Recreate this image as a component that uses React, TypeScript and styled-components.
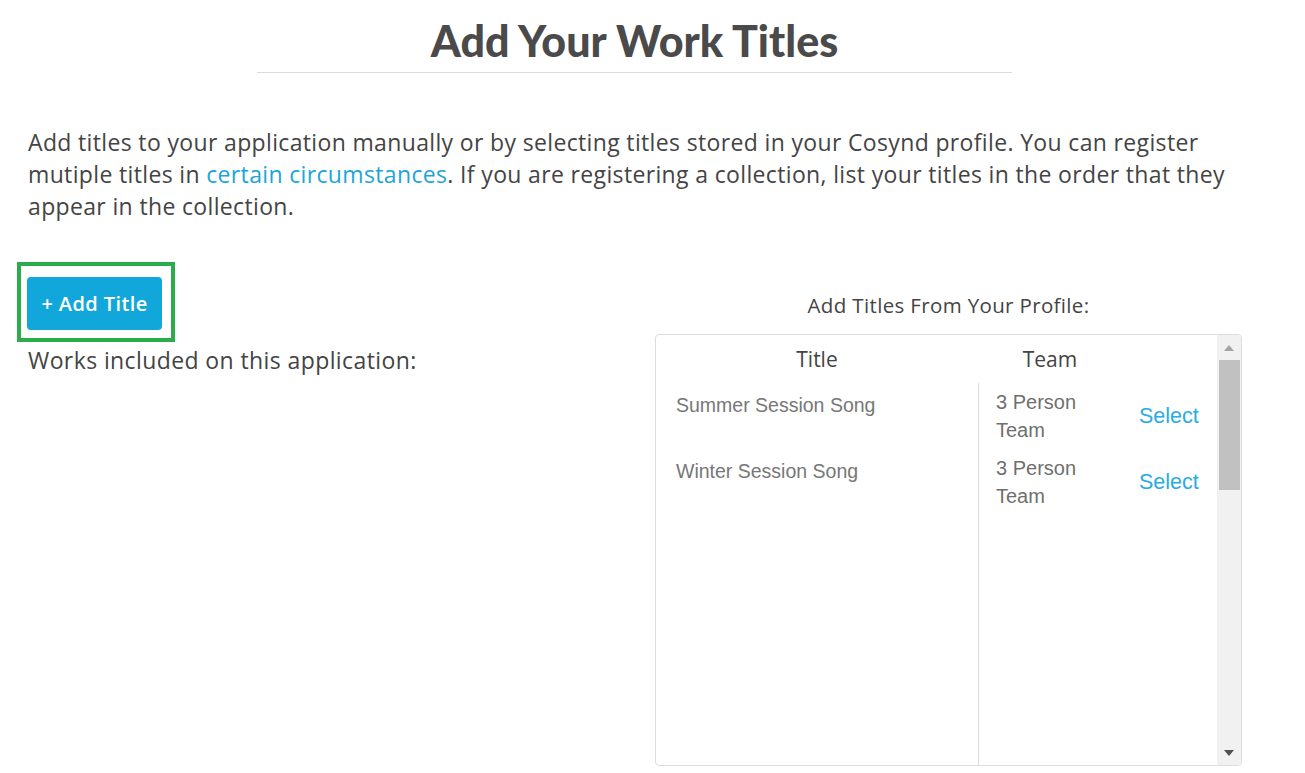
import React from "react";
import styled, { createGlobalStyle } from "styled-components";

const Global = createGlobalStyle`
  html, body { margin: 0; padding: 0; background: #fff; }
  body { font-family: "Open Sans", "Noto Sans", sans-serif; color: #444; }
  * { box-sizing: border-box; }
`;

const Page = styled.div`
  width: 1269px;
  padding: 15px 0 0 0;
`;

const Heading = styled.h1`
  width: 755px;
  margin: 0 auto;
  padding: 0 0 5px 0;
  border-bottom: 1px solid #dcdcdc;
  text-align: center;
  font-family: "Lato", sans-serif;
  font-weight: 900;
  font-size: 43px;
  line-height: 52px;
  color: #4a4a4a;
`;

const Intro = styled.p`
  margin: 53px 0 0 28px;
  width: 1235px;
  font-size: 23px;
  letter-spacing: 0.35px;
  line-height: 32px;
  color: #444;
`;

const Link = styled.a`
  color: #1da5d9;
  text-decoration: none;
`;

const Columns = styled.div`
  display: flex;
  margin-top: 40px;
`;

const LeftCol = styled.div`
  width: 655px;
  padding-left: 17px;
  display: flex;
  flex-direction: column;
  align-items: flex-start;
`;

const Highlight = styled.div`
  border: 4px solid #2aac4b;
  padding: 11px 9px 8px 6px;
`;

const AddButton = styled.button`
  width: 135px;
  height: 53px;
  border: none;
  border-radius: 4px;
  background: #12a7db;
  color: #fff;
  font-family: "Open Sans", sans-serif;
  font-weight: 600;
  font-size: 20px;
  letter-spacing: 0.4px;
  padding: 0;
  cursor: pointer;
`;

const WorksLabel = styled.div`
  margin: 4px 0 0 11px;
  font-size: 23px;
  letter-spacing: 0.4px;
  line-height: 28px;
  color: #444;
`;

const RightCol = styled.div`
  width: 587px;
  display: flex;
  flex-direction: column;
  padding-top: 29px;
`;

const ProfileLabel = styled.div`
  text-align: center;
  font-size: 20.5px;
  letter-spacing: 0.35px;
  line-height: 28px;
  color: #444;
  margin-bottom: 15px;
`;

const TableBox = styled.div`
  height: 432px;
  border: 1px solid #dddddd;
  border-radius: 4px;
  display: flex;
  overflow: hidden;
`;

const TableMain = styled.div`
  flex: 1;
  display: flex;
  flex-direction: column;
`;

const HeaderRow = styled.div`
  height: 48px;
  display: flex;
  align-items: center;
  font-family: "Open Sans", sans-serif;
  font-size: 21px;
  color: #444;
`;

const HeadCell = styled.div<{ $w: number }>`
  width: ${(p) => p.$w}px;
  text-align: center;
`;

const Body = styled.div`
  flex: 1;
  display: flex;
`;

const TitleColumn = styled.div`
  width: 322px;
`;

const TeamColumn = styled.div`
  flex: 1;
  border-left: 1px solid #dcdcdc;
`;

const TitleCell = styled.div`
  height: 66px;
  padding: 8px 0 0 20px;
  font-family: "Liberation Sans", Arial, sans-serif;
  font-size: 19.5px;
  line-height: 28px;
  color: #777;
`;

const TeamRow = styled.div`
  height: 66px;
  display: flex;
  align-items: center;
`;

const TeamText = styled.div`
  width: 143px;
  padding-left: 17px;
  font-family: "Liberation Sans", Arial, sans-serif;
  font-size: 20px;
  line-height: 28px;
  color: #6f6f6f;
`;

const SelectLink = styled.a`
  padding-left: 17px;
  font-family: "Liberation Sans", Arial, sans-serif;
  font-size: 21.5px;
  color: #29ade0;
  text-decoration: none;
`;

const Scrollbar = styled.div`
  width: 24px;
  background: #f1f1f1;
  display: flex;
  flex-direction: column;
  align-items: center;
`;

const Arrow = styled.div<{ $down?: boolean }>`
  height: 25px;
  display: flex;
  align-items: center;
  justify-content: center;
  &::after {
    content: "";
    width: 0;
    height: 0;
    border-left: 5px solid transparent;
    border-right: 5px solid transparent;
    ${(p) =>
      p.$down
        ? "border-top: 6px solid #505050;"
        : "border-bottom: 6px solid #a3a3a3;"}
  }
`;

const Track = styled.div`
  flex: 1;
  width: 100%;
  display: flex;
  justify-content: center;
`;

const Thumb = styled.div`
  width: 21px;
  height: 130px;
  background: #c1c1c1;
`;

const rows = [
  { title: "Summer Session Song" },
  { title: "Winter Session Song" },
];

export default function App() {
  return (
    <>
      <Global />
      <Page>
        <Heading>Add Your Work Titles</Heading>
        <Intro>
          Add titles to your application manually or by selecting titles stored in your Cosynd
          profile. You can register mutiple titles in{" "}
          <Link href="#">certain circumstances</Link>. If you are registering a collection, list
          your titles in the order that they appear in the collection.
        </Intro>
        <Columns>
          <LeftCol>
            <Highlight>
              <AddButton>+ Add Title</AddButton>
            </Highlight>
            <WorksLabel>Works included on this application:</WorksLabel>
          </LeftCol>
          <RightCol>
            <ProfileLabel>Add Titles From Your Profile:</ProfileLabel>
            <TableBox>
              <TableMain>
                <HeaderRow>
                  <HeadCell $w={322}>Title</HeadCell>
                  <HeadCell $w={144}>Team</HeadCell>
                </HeaderRow>
                <Body>
                  <TitleColumn>
                    {rows.map((r) => (
                      <TitleCell key={r.title}>{r.title}</TitleCell>
                    ))}
                  </TitleColumn>
                  <TeamColumn>
                    {rows.map((r) => (
                      <TeamRow key={r.title}>
                        <TeamText>
                          3 Person
                          <br />
                          Team
                        </TeamText>
                        <SelectLink href="#">Select</SelectLink>
                      </TeamRow>
                    ))}
                  </TeamColumn>
                </Body>
              </TableMain>
              <Scrollbar>
                <Arrow />
                <Track>
                  <Thumb />
                </Track>
                <Arrow $down />
              </Scrollbar>
            </TableBox>
          </RightCol>
        </Columns>
      </Page>
    </>
  );
}
